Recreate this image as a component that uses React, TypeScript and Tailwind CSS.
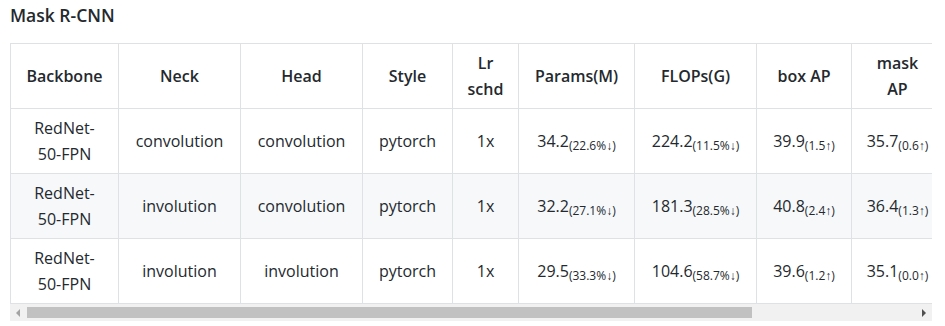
type Row = {
  backbone: string[]
  neck: string
  head: string
  style: string
  lr: string
  params: [string, string]
  flops: [string, string]
  box: [string, string]
  mask: [string, string]
}

const rows: Row[] = [
  {
    backbone: ["RedNet-", "50-FPN"],
    neck: "convolution",
    head: "convolution",
    style: "pytorch",
    lr: "1x",
    params: ["34.2", "(22.6%↓)"],
    flops: ["224.2", "(11.5%↓)"],
    box: ["39.9", "(1.5↑)"],
    mask: ["35.7", "(0.6↑)"],
  },
  {
    backbone: ["RedNet-", "50-FPN"],
    neck: "involution",
    head: "convolution",
    style: "pytorch",
    lr: "1x",
    params: ["32.2", "(27.1%↓)"],
    flops: ["181.3", "(28.5%↓)"],
    box: ["40.8", "(2.4↑)"],
    mask: ["36.4", "(1.3↑)"],
  },
  {
    backbone: ["RedNet-", "50-FPN"],
    neck: "involution",
    head: "involution",
    style: "pytorch",
    lr: "1x",
    params: ["29.5", "(33.3%↓)"],
    flops: ["104.6", "(58.7%↓)"],
    box: ["39.6", "(1.2↑)"],
    mask: ["35.1", "(0.0↑)"],
  },
]

const widths = [108, 122, 122, 90, 66, 116, 122, 95, 92]

const th = "border border-[#dfe2e5] px-[13px] py-[6px] font-semibold text-center"
const td = "border border-[#dfe2e5] px-[13px] py-[6px] text-center"

function Val({ v }: { v: [string, string] }) {
  return (
    <>
      {v[0]}
      <sub>{v[1]}</sub>
    </>
  )
}

export default function App() {
  return (
    <div
      className="w-[945px] h-[326px] bg-white text-[#24292e] text-[16px] leading-[26px] px-[10px] pt-[3px] overflow-hidden"
      style={{ fontFamily: '"Open Sans", "Noto Sans", sans-serif' }}
    >
      <h4 className="font-semibold text-[17.5px] leading-[24px] mb-[16px]">Mask R-CNN</h4>

      <div className="w-[922px] overflow-hidden">
        <table className="table-fixed border-collapse w-[933px]">
          <colgroup>
            {widths.map((w, i) => (
              <col key={i} style={{ width: w }} />
            ))}
          </colgroup>
          <thead>
            <tr className="bg-white">
              <th className={th}>Backbone</th>
              <th className={th}>Neck</th>
              <th className={th}>Head</th>
              <th className={th}>Style</th>
              <th className={th}>
                Lr
                <br />
                schd
              </th>
              <th className={th}>Params(M)</th>
              <th className={th}>FLOPs(G)</th>
              <th className={th}>box AP</th>
              <th className={th}>
                mask
                <br />
                AP
              </th>
            </tr>
          </thead>
          <tbody>
            {rows.map((r, i) => (
              <tr key={i} className={i % 2 === 1 ? "bg-[#f6f8fa]" : "bg-white"}>
                <td className={td}>
                  {r.backbone[0]}
                  <br />
                  {r.backbone[1]}
                </td>
                <td className={td}>{r.neck}</td>
                <td className={td}>{r.head}</td>
                <td className={td}>{r.style}</td>
                <td className={td}>{r.lr}</td>
                <td className={td}>
                  <Val v={r.params} />
                </td>
                <td className={td}>
                  <Val v={r.flops} />
                </td>
                <td className={td}>
                  <Val v={r.box} />
                </td>
                <td className={td}>
                  <Val v={r.mask} />
                </td>
              </tr>
            ))}
          </tbody>
        </table>

        {/* scrollbar */}
        <div className="flex items-center h-[17px] bg-[#f1f1f1]">
          <div className="w-[17px] flex justify-center">
            <svg width="5" height="8" viewBox="0 0 5 8">
              <path d="M4 0 L0 4 L4 8 Z" fill="#a3a3a3" />
            </svg>
          </div>
          <div className="flex-1 h-full py-[3px]">
            <div className="w-[725px] h-full bg-[#c1c1c1]" />
          </div>
          <div className="w-[17px] flex justify-center">
            <svg width="5" height="8" viewBox="0 0 5 8">
              <path d="M1 0 L5 4 L1 8 Z" fill="#505050" />
            </svg>
          </div>
        </div>
      </div>
    </div>
  )
}
